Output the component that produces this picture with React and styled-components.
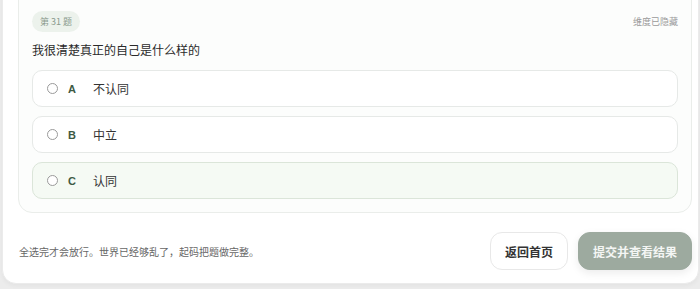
import React from "react";
import styled, { createGlobalStyle } from "styled-components";

const Global = createGlobalStyle`
  html, body { margin: 0; padding: 0; background: #ececec; overflow: hidden; }
  body { font-family: "Noto Sans CJK SC", "Noto Sans", sans-serif; }
  * { box-sizing: border-box; }
`;

const Viewport = styled.div`
  width: 700px;
  height: 289px;
  overflow: hidden;
`;

const Shell = styled.div`
  margin: -40px 1px 0 2px;
  background: #ffffff;
  border: 1px solid #ebebeb;
  border-radius: 0 0 14px 14px;
  padding: 0 6px 13px 15px;
  box-shadow: 0 2px 4px rgba(0, 0, 0, 0.04);
`;

const QuestionCard = styled.div`
  background: #fcfdfc;
  border: 1px solid #eaedea;
  border-radius: 14px;
  padding: 49px 13px 13px 13px;
`;

const HeaderRow = styled.div`
  display: flex;
  align-items: center;
  justify-content: space-between;
`;

const Badge = styled.span`
  display: inline-flex;
  align-items: center;
  height: 21px;
  padding: 0 8px;
  border-radius: 11px;
  background: #ecf2ec;
  color: #8a9a8c;
  font-size: 9px;
`;

const Hidden = styled.span`
  font-size: 9px;
  color: #9a9a9a;
`;

const Question = styled.div`
  margin-top: 9px;
  font-size: 12px;
  color: #2a2a2a;
  line-height: 18px;
`;

const Options = styled.div`
  margin-top: 11px;
  display: flex;
  flex-direction: column;
  gap: 9px;
`;

const Option = styled.div`
  display: flex;
  align-items: center;
  height: 37px;
  padding: 0 14px;
  border-radius: 10px;
  border: 1px solid ${(p) => (p.$active ? "#dbe5d9" : "#e6e9e7")};
  background: ${(p) => (p.$active ? "#f5faf4" : "#ffffff")};
`;

const Radio = styled.span`
  width: 11px;
  height: 11px;
  margin-top: -1px;
  border-radius: 50%;
  border: 1px solid #9a9a9a;
  background: #fff;
  flex: none;
`;

const Letter = styled.span`
  margin-left: 10px;
  width: 25px;
  font-size: 11px;
  font-weight: 700;
  color: #3d5a43;
  font-family: "Liberation Sans", "Noto Sans", sans-serif;
`;

const OptionText = styled.span`
  font-size: 12px;
  color: #333;
`;

const Footer = styled.div`
  display: flex;
  align-items: center;
  padding-top: 19px;
`;

const Note = styled.div`
  flex: 1;
  font-size: 10px;
  color: #666;
  margin-left: 1px;
`;

const Button = styled.button`
  height: 38px;
  padding: 0 14px;
  border-radius: 12px;
  font-family: "Noto Sans CJK SC", sans-serif;
  font-size: 12px;
  font-weight: 700;
  cursor: pointer;
  border: 1px solid ${(p) => (p.$primary ? "#9daa9f" : "#e8e8e8")};
  background: ${(p) => (p.$primary ? "#9daa9f" : "#ffffff")};
  color: ${(p) => (p.$primary ? "#f4f6f4" : "#333")};
  box-shadow: ${(p) => (p.$primary ? "0 3px 8px rgba(0,0,0,0.08)" : "none")};
  & + & { margin-left: 10px; }
`;

const options = [
  { k: "A", t: "不认同" },
  { k: "B", t: "中立" },
  { k: "C", t: "认同", active: true },
];

export default function App() {
  return (
    <Viewport>
      <Global />
      <Shell>
        <QuestionCard>
          <HeaderRow>
            <Badge>第 31 题</Badge>
            <Hidden>维度已隐藏</Hidden>
          </HeaderRow>
          <Question>我很清楚真正的自己是什么样的</Question>
          <Options>
            {options.map((o) => (
              <Option key={o.k} $active={o.active}>
                <Radio />
                <Letter>{o.k}</Letter>
                <OptionText>{o.t}</OptionText>
              </Option>
            ))}
          </Options>
        </QuestionCard>
        <Footer>
          <Note>全选完才会放行。世界已经够乱了，起码把题做完整。</Note>
          <Button>返回首页</Button>
          <Button $primary>提交并查看结果</Button>
        </Footer>
      </Shell>
    </Viewport>
  );
}
